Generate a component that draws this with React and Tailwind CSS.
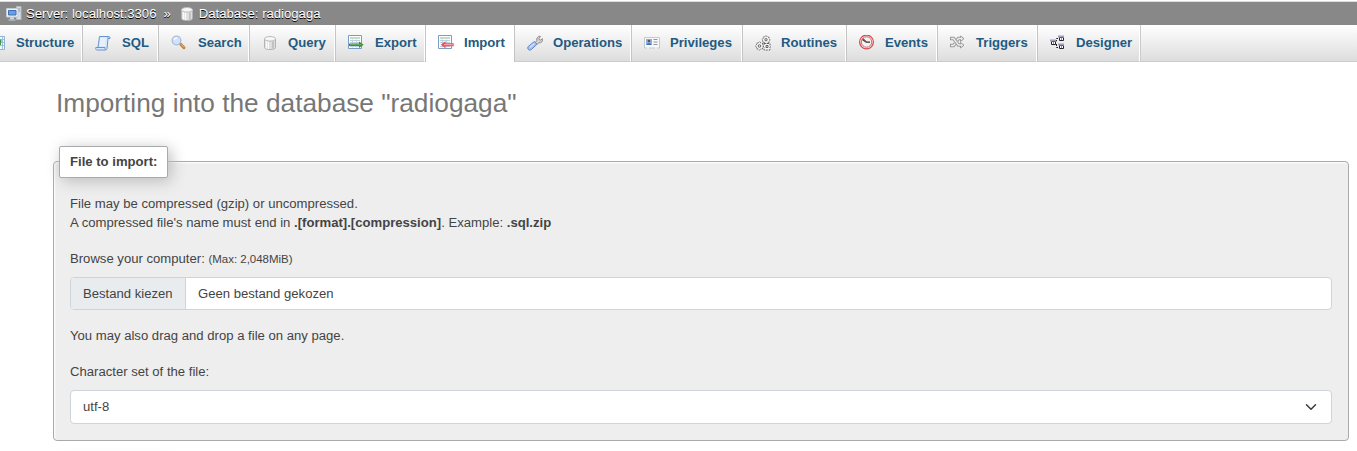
import React from "react";

const Svg = ({ children }) => (
  <svg width="16" height="16" viewBox="0 0 16 16" fill="none" className="block shrink-0">
    {children}
  </svg>
);

const ServerIcon = () => (
  <Svg>
    <path d="M10.500 .5h4.500v13h-4.500z" fill="#d9dde2" stroke="#b4bac1" />
    <path d="M11.500 3h2.500M11.500 5h2.500" stroke="#8b939c" />
    <path d="M.5 2.500h11.500v8.500h-11.500z" fill="#eef1f5" stroke="#c3cad4" />
    <path d="M2.500 4.500h7.500v4.500h-7.500z" fill="#6a9fe0" stroke="#3b6fb3" />
    <path d="M4.500 11.500h3v1.500h-3zM2.500 14h7" fill="#dfe3e8" stroke="#c8ced5" />
  </Svg>
);

const CylinderIcon = () => (
  <Svg>
    <path d="M2.500 4v8.500c0 1.300 2.300 2 5.500 2s5.500-.7 5.500-2V4z" fill="#dedede" stroke="#b3b3b3" />
    <path d="M4.500 6v7.500M6.500 6.500v7.500" stroke="#fafafa" strokeWidth="1.300" />
    <path d="M11 6.500v7" stroke="#c2c2c2" strokeWidth="2" />
    <ellipse cx="8" cy="3.800" rx="5.500" ry="2.300" fill="#f6f6f6" stroke="#bdbdbd" />
  </Svg>
);

const StructureIcon = () => (
  <Svg>
    <path d="M4.500 1.500h11v13h-11z" fill="#f4f9ff" stroke="#8fb3d9" />
    <path d="M5 4.500h10M5 7.500h10M5 10.500h10M13.500 2v12" stroke="#9dc0e0" />
    <path d="M10 3l3.500 3.500H12V10H9V6.500H7z" fill="#3f9c45" />
  </Svg>
);

const SqlIcon = () => (
  <Svg>
    <path d="M4.500 1.500h9c1.200 0 1.800.8 1.500 2h-2l-1 10c-.2 1-.8 1.500-1.800 1.500H2c-1 0-1.500-.8-1.200-2.500H3z" fill="#d8e9fc" stroke="#6a94cf" />
    <path d="M3 12.500h7c-.4 1 .1 2 .8 2.300M13 3.500c-.3-1 .1-1.700.7-2" stroke="#6a94cf" />
    <path d="M5.500 4h5M5.300 6h5M5 8h5M4.800 10h5" stroke="#f4f9ff" />
  </Svg>
);

const SearchIcon = () => (
  <Svg>
    <path d="M9.700 9.200l3.300 3.500" stroke="#b98244" strokeWidth="3" strokeLinecap="round" />
    <path d="M10 9.200l2.800 3" stroke="#f0bd70" strokeLinecap="round" />
    <circle cx="5.500" cy="5.500" r="4.300" fill="#cfe3fa" stroke="#a9bbdc" strokeWidth="1.300" />
    <path d="M3.200 4.800c.4-1.300 1.600-2 3-1.900" stroke="#fff" strokeWidth="1.300" />
  </Svg>
);

const Sheet = () => (
  <>
    <path d="M.5 .5h13v13h-13z" fill="#fbfdff" stroke="#7e9cc3" />
    <path d="M2 3h10" stroke="#8dbd86" />
    <path d="M2 5.500h10M2 7.500h10M2 11.500h10M4.500 4.500v8M8.500 4.500v8" stroke="#bccfe4" />
  </>
);

const ExportIcon = () => (
  <Svg>
    <Sheet />
    <path d="M1 8.500h10V6.500l4.700 3.200L11 13v-2H1z" fill="#398d36" />
    <path d="M2 9.700h11.500" stroke="#7dbb70" strokeWidth=".8" />
  </Svg>
);

const ImportIcon = () => (
  <Svg>
    <Sheet />
    <path d="M15.700 8.300H7.500V6.300L2.700 9.700l4.800 3.500v-2h8.200z" fill="#e8525a" />
    <path d="M14.700 9.700H6" stroke="#ffb1b3" />
  </Svg>
);

const WrenchIcon = () => (
  <Svg>
    <path d="M8.300 7.500l1.500-2c-.4-2 .8-4.200 3.200-4.500l.5.700-1.500 1.600.4 1.500 1.500.3 1.500-1.500.4.600c.1 2.400-2 4.100-4.200 3.700L10 9.500z" fill="#d5d3d0" stroke="#918d88" />
    <path d="M7.300 6.500L1.200 11.500c-1.600 2 .9 4.800 3.100 3.100L10 9.200z" fill="#9fbdf0" stroke="#6488cb" />
    <path d="M7.300 8.500l-4.500 3.900" stroke="#d3e2fc" strokeWidth="1.500" />
  </Svg>
);

const PrivilegesIcon = () => (
  <Svg>
    <path d="M.5 2.500h15v10.500H.5z" fill="#f8f9fb" stroke="#c5c9ce" />
    <path d="M2 4h6v6H2z" fill="#8bb1de" />
    <circle cx="5" cy="6" r="1.300" fill="#71503e" />
    <path d="M2.500 10c.3-2.500 4.700-2.500 5 0z" fill="#3f72b2" />
    <path d="M9.500 4.500h4M9.500 7h4M9.500 9.500h4" stroke="#8e969f" />
    <path d="M3 13h2M11 13h2" stroke="#fff" />
  </Svg>
);

const RoutinesIcon = () => (
  <Svg>
    <g stroke="#555" fill="#f6f6f6" strokeWidth=".9">
      <path strokeDasharray="2 1" d="M11 .5L12.500 2H14v1.500L15.200 5 14 6.200v1.500h-1.500L11 9 9.500 7.700H8V6.200L6.800 5 8 3.500V2h1.500z" />
      <circle cx="11" cy="4.700" r="1.200" />
      <path strokeDasharray="2 1" d="M4.500 6.800L6 8.100h1.500v1.500l1.200 1.500-1.200 1.200v1.500H6l-1.500 1.300L3 13.800H1.500v-1.500L.4 11.100l1.100-1.500V8.100H3z" />
      <circle cx="4.500" cy="11" r="1.300" />
      <path strokeDasharray="2 1" d="M9 8.500h6v2l.5 1-.5 1v2.500H9v-2.500l-.5-1 .5-1z" />
      <path d="M11 10.500h2v2h-2z" />
    </g>
  </Svg>
);

const EventsIcon = () => (
  <Svg>
    <circle cx="7.500" cy="7" r="6.900" fill="#f6e3e1" stroke="#d9494c" strokeWidth="1.200" />
    <circle cx="7.500" cy="7" r="5.200" fill="#f3f3f3" stroke="#c9716f" />
    <path d="M3.500 4.500l3.800 2.700H11" stroke="#303030" strokeWidth="1.300" />
    <path d="M4 3.800l3.300 3.100" stroke="#7b4d46" strokeWidth="1.200" />
  </Svg>
);

const TriggersIcon = () => (
  <Svg>
    <path d="M0 3.500h3.500l5 6.500H11M0 10.500h3.500L5 8.700M7 5.300l1.500-1.800H11" stroke="#999" strokeWidth="3.400" />
    <path d="M10.500 1L14 3.700l-3.500 2.800zM10.500 7.500l3.500 2.700-3.500 2.800z" fill="#e8e8e8" stroke="#999" />
    <path d="M1 3.500h2.500l5 6.500h3M1 10.500h2.500L5 8.700M7 5.300l1.500-1.800h3" stroke="#eee" strokeWidth="1.400" />
  </Svg>
);

const DesignerIcon = () => (
  <Svg>
    <path d="M5.500 6h1V3.500H8M6.500 9v3.500H8" stroke="#222" strokeDasharray="2 1" />
    <path d="M1.500 6.500h4v3h-4zM9.500 2.500h4v3h-4zM9.500 10.500h4v3h-4z" fill="#fff" stroke="#222" />
    <path d="M0 5.500h6M8 1.500h6M8 9.500h6" stroke="#a29cc9" strokeWidth="2" />
    <path d="M3 8h1M11 4h1M11 12h1" stroke="#222" />
  </Svg>
);

const tabs = [
  { label: "SQL", Icon: SqlIcon, width: "w-[76px]", gap: "ml-[11px]" },
  { label: "Search", Icon: SearchIcon, width: "w-[91px]", gap: "ml-[11px]" },
  { label: "Query", Icon: CylinderIcon, width: "w-[86px]", gap: "ml-[10px]" },
  { label: "Export", Icon: ExportIcon, width: "w-[90px]", gap: "ml-[11px]" },
  { label: "Import", Icon: ImportIcon, width: "w-[89px]", gap: "ml-[10px]", active: true },
  { label: "Operations", Icon: WrenchIcon, width: "w-[117px]", gap: "ml-[10px]" },
  { label: "Privileges", Icon: PrivilegesIcon, width: "w-[111px]", gap: "ml-[10px]" },
  { label: "Routines", Icon: RoutinesIcon, width: "w-[104px]", gap: "ml-[10px]" },
  { label: "Events", Icon: EventsIcon, width: "w-[91px]", gap: "ml-[10px]" },
  { label: "Triggers", Icon: TriggersIcon, width: "w-[100px]", gap: "ml-[10px]" },
  { label: "Designer", Icon: DesignerIcon, width: "w-[103px]", gap: "ml-[10px]" },
];

const Tab = ({ label, Icon, width, active, gap }) => (
  <a
    className={`flex h-full shrink-0 items-center border-r border-r-white pb-px pl-[12px] ${width} ${
      active ? "bg-white" : "border-b border-b-[#ccc]"
    } border-l border-l-[#c4c4c4]`}
  >
    <Icon />
    <span className={gap}>{label}</span>
  </a>
);

export default function App() {
  return (
    <div className="h-[451px] w-[1357px] overflow-hidden bg-white font-['Liberation_Sans',Arial,sans-serif] text-[13.12px] leading-[19.68px] text-[#444]">
      <div className="h-0.5 border-b border-[#ddd] bg-white" />
      <header className="flex h-[23px] items-center bg-[#888] pl-[6px] text-white [text-shadow:0_1px_0_#000]">
        <ServerIcon />
        <span className="ml-[4px]">Server: localhost:3306</span>
        <span className="ml-[7px]">»</span>
        <span className="ml-[8px]"><CylinderIcon /></span>
        <span className="ml-[4px]">Database: radiogaga</span>
      </header>
      <nav className="flex h-[37px] bg-linear-to-b from-white to-[#dcdcdc] font-bold text-[#235a81]">
        <a className="flex h-full w-[82px] shrink-0 items-center border-r border-b border-r-white border-b-[#ccc] pb-px">
          <span className="-ml-[11px]"><StructureIcon /></span>
          <span className="ml-[11px]">Structure</span>
        </a>
        {tabs.map((tab) => <Tab key={tab.label} {...tab} />)}
        <div className="grow border-b border-l border-[#ccc]" />
      </nav>

      <main className="pr-[8px] pl-[53px]">
        <h2 className="mt-[22px] ml-[3px] text-[26.24px] leading-[38px] text-[#777]">
          Importing into the database "radiogaga"
        </h2>
        <section className="mt-[39px] h-[280px] rounded-[4px] border border-[#aaa] bg-[#eee] px-4 shadow-[inset_1px_1px_2px_#fff]">
          <div className="-mt-[16px] -ml-[11px] flex h-[32px] w-[109px] items-center rounded-[2px] border border-[#aaa] bg-white pl-[10px] font-bold shadow-[3px_3px_15px_#bbb]">
            File to import:
          </div>
          <p className="mt-[16px] leading-[19px]">
            File may be compressed (gzip) or uncompressed.
            <br />
            A compressed file's name must end in <b>.[format].[compression]</b>. Example: <b>.sql.zip</b>
          </p>
          <label className="mt-[17px] block leading-[19px]">
            Browse your computer: <small className="text-[11.48px]">(Max: 2,048MiB)</small>
          </label>
          <div className="mt-[8px] flex h-[33px] overflow-hidden rounded-[4px] border border-[#ced4da] bg-white">
            <span className="flex w-[115px] items-center border-r border-[#ced4da] bg-[#e9ecef] pl-3">Bestand kiezen</span>
            <span className="flex items-center pl-3">Geen bestand gekozen</span>
          </div>
          <p className="mt-[16px] leading-[19px]">You may also drag and drop a file on any page.</p>
          <label className="mt-[17px] block leading-[19px]">Character set of the file:</label>
          <div className="mt-[9px] flex h-[34px] items-center justify-between rounded-[4px] border border-[#ced4da] bg-white pr-[14px] pl-3">
            <span>utf-8</span>
            <svg width="12" height="12" viewBox="0 0 16 16" fill="none" stroke="#343a40" strokeWidth="2" strokeLinecap="round" strokeLinejoin="round">
              <path d="M2 5l6 6 6-6" />
            </svg>
          </div>
        </section>
        <div className="mt-[19px] ml-[5px] h-[32px] w-[110px] shadow-[3px_3px_15px_#bbb]" />
      </main>
    </div>
  );
}
